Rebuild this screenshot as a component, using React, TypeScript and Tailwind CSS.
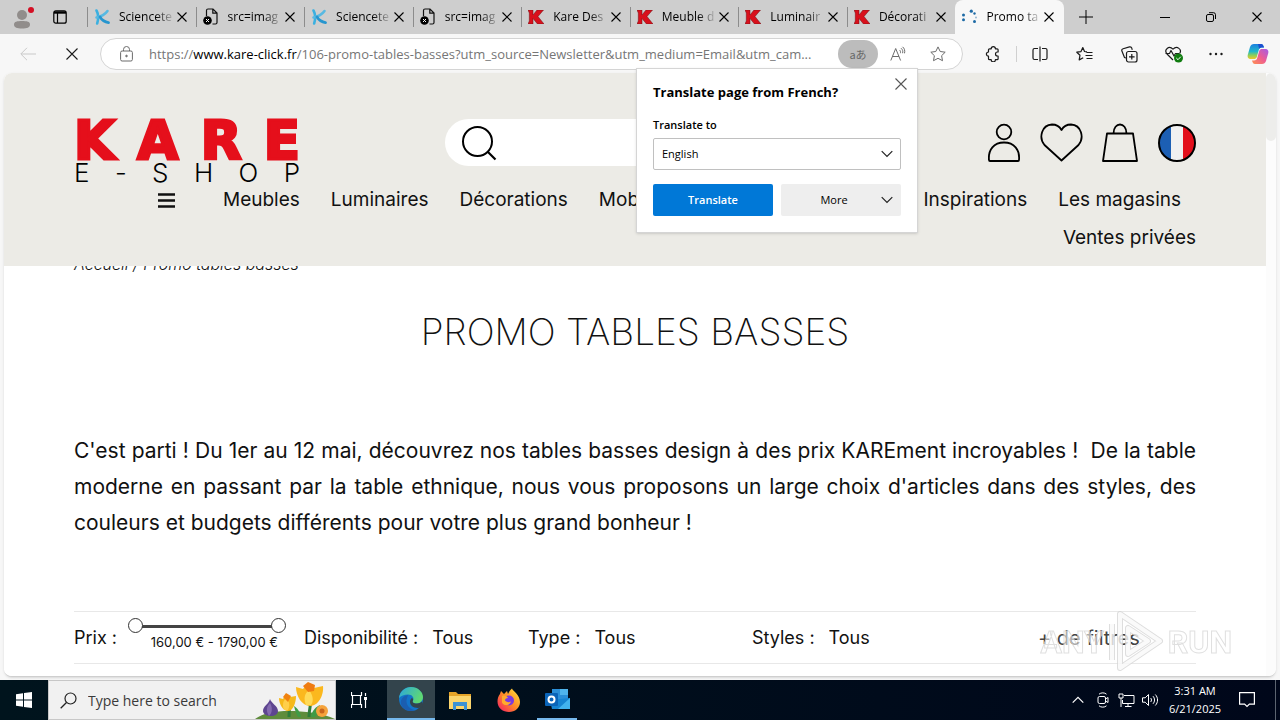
import type { ReactNode } from "react";

const UI = "font-['Open_Sans','Noto_Sans',sans-serif]";

function Svg({ w = 20, h = 20, box, children, cls = "" }: { w?: number; h?: number; box?: string; children: ReactNode; cls?: string }) {
  return (
    <svg width={w} height={h} viewBox={box ?? `0 0 ${w} ${h}`} fill="none" stroke="currentColor" className={`shrink-0 ${cls}`} aria-hidden="true">
      {children}
    </svg>
  );
}

const Cross = ({ size = 10 }: { size?: number }) => (
  <Svg w={size} h={size}><path d={`M.5.5L${size - 0.5} ${size - 0.5}M${size - 0.5}.5L.5 ${size - 0.5}`} strokeWidth="1.1" /></Svg>
);
const Chevron = () => (
  <Svg w={12} h={8}><path d="M.7 1.2L6 6.500l5.300-5.300" strokeWidth="1.200" /></Svg>
);

const ScienceIcon = () => (
  <Svg w={16} h={16}>
    <path d="M2.500 1.500C4.500 5 4.500 10 3.200 14.500" stroke="#3bb0e0" strokeWidth="2.600" strokeLinecap="round" />
    <path d="M13.500 2C11 5.500 7.500 7.500 2.500 8.500" stroke="#57b9e2" strokeWidth="2.600" strokeLinecap="round" />
    <path d="M6 8c2 3.200 4.500 5 8.500 5.600" stroke="#2796cf" strokeWidth="2.800" strokeLinecap="round" />
  </Svg>
);
const FileIcon = () => (
  <Svg w={16} h={18}>
    <path d="M3.500 8V2.500C3.500 1.500 4 1 5 1h5l4 4v9.500c0 1-.5 1.500-1.500 1.500H9.500M9.800 1v4.200H14" stroke="#111" strokeWidth="1.200" />
    <circle cx="4.500" cy="12.500" r="4.300" fill="#000" stroke="none" />
    <path d="M3 11l3 3M6 11l-3 3" stroke="#fff" />
  </Svg>
);
const KareIcon = () => (
  <Svg w={16} h={14}>
    <path d="M0 0h5v5l4-5h6.500L10 6.500 16 14H9.500L5 8.500V14H0l1.300-3V3z" fill="#d8101c" stroke="#6e1014" strokeWidth=".5" />
  </Svg>
);
const LoadIcon = () => (
  <Svg w={16} h={16}>
    <g fill="#1d6aa5" stroke="none">
      <circle cx="2.500" cy="6" r="1.500" /><circle cx="2.500" cy="10.800" r="1.500" /><circle cx="10.300" cy="2.200" r="1.600" />
      <circle cx="13.500" cy="4.500" r="1.200" /><circle cx="15" cy="8.500" r=".9" opacity=".5" /><circle cx="13.500" cy="12.500" r="1.500" />
    </g>
  </Svg>
);

const TABS: { title: string; icon: ReactNode }[] = [
  { title: "Sciencete", icon: <ScienceIcon /> },
  { title: "src=imag", icon: <FileIcon /> },
  { title: "Sciencete", icon: <ScienceIcon /> },
  { title: "src=imag", icon: <FileIcon /> },
  { title: "Kare Des", icon: <KareIcon /> },
  { title: "Meuble d", icon: <KareIcon /> },
  { title: "Luminair", icon: <KareIcon /> },
  { title: "Décorati", icon: <KareIcon /> },
  { title: "Promo ta", icon: <LoadIcon /> },
];

function TabBar() {
  return (
    <div className="flex h-[34px] items-stretch bg-[#cecece]">
      <div className="flex w-[87px] shrink-0 items-center gap-[18px] pl-3">
        <button aria-label="Profile" className="shrink-0">
          <Svg w={23} h={24}>
            <circle cx="10" cy="10" r="5" fill="#918d8b" stroke="none" />
            <path d="M2 19.500c0-3 3-3.500 8-3.500s8 .5 8 3.500-3 4-8 4-8-1-8-4z" fill="#918d8b" stroke="none" />
            <circle cx="19" cy="5" r="3" fill="#d40f24" stroke="none" />
          </Svg>
        </button>
        <button aria-label="Tab actions" className="shrink-0">
          <Svg w={14} h={14}><rect x=".8" y=".8" width="12.400" height="12.400" rx="2" strokeWidth="1.200" /><path d="M1 2.500h12" strokeWidth="2.400" /><path d="M4.500 3v10" strokeWidth="1.200" /></Svg>
        </button>
      </div>
      <div role="tablist" className="grid flex-[0_1_977px] grid-cols-9">
        {TABS.map((t, i) => (
          <div
            key={i}
            className={i === 8 ? "flex items-center rounded-t-lg bg-[#f7f7f7] pr-[10px] pl-[6px]" : "relative flex items-center pr-[9px] pl-[7px] before:absolute before:left-0 before:h-5 before:w-px before:bg-[#8c8c8c]"}
          >
            <button role="tab" aria-selected={i === 8} className="flex min-w-0 flex-1 items-center gap-[9px] text-left">
              {t.icon}
              <span className={`${UI} flex-1 whitespace-nowrap text-[12px] leading-5 text-black [mask-image:linear-gradient(to_right,#000_65%,transparent)]`}>{t.title}</span>
            </button>
            <button aria-label="Close tab" className="ml-[2px]"><Cross /></button>
          </div>
        ))}
      </div>
      <button aria-label="New tab" className="ml-[15px] self-center"><Svg w={14} h={14}><path d="M7 0v14M0 7h14" /></Svg></button>
      <div className="ml-auto flex items-center gap-9 pr-[18px]">
        <button aria-label="Minimize"><Svg w={10} h={10}><path d="M0 5.500h10" /></Svg></button>
        <button aria-label="Restore"><Svg w={10} h={10}><rect x=".5" y="2.500" width="7" height="7" rx="1.500" /><path d="M3 .7h4.500a2 2 0 0 1 2 2V7" /></Svg></button>
        <button aria-label="Close"><Cross /></button>
      </div>
    </div>
  );
}

function Toolbar() {
  return (
    <div className="flex h-10 items-center bg-[#f7f7f7] text-[#1b1b1b]">
      <button aria-label="Back" className="ml-5 text-[#c9c9c9]"><Svg w={16} h={14}><path d="M7 .8L.8 7 7 13.200M1 7h15" /></Svg></button>
      <button aria-label="Stop" className="ml-[30px]"><Cross size={12} /></button>
      <div className="ml-[22px] flex h-8 min-w-0 flex-[0_1_863px] items-center rounded-full border border-[#d4d4d4] bg-white pl-[19px] text-[#6b6b6b]">
        <Svg w={13} h={16}><rect x=".6" y="5" width="11.800" height="10" rx="1.500" /><path d="M3.500 5V3.500a3 3 0 0 1 6 0V5" /><circle cx="6.500" cy="10" r=".8" fill="currentColor" /></Svg>
        <a href="#top" className={`${UI} ml-4 min-w-0 flex-1 truncate text-[13px] leading-6 text-[#767676]`}>
          https://<span className="text-black">www.kare-click.fr</span>/106-promo-tables-basses?utm_source=Newsletter&amp;utm_medium=Email&amp;utm_cam...
        </a>
        <button aria-label="Translate" className="ml-2 flex h-7 w-10 items-center justify-center rounded-full bg-[#bcbcbc] font-['Noto_Sans_CJK_JP',sans-serif] text-[11px] leading-4 text-[#686868]">aあ</button>
        <button aria-label="Read aloud" className="ml-3"><Svg w={16} h={16}><path d="M.8 14.500L5.700 2.500l4.900 12M2.500 10.500H9M9.500 4c1 .8 1.200 2 .9 3.200M11 2.200c1.700 1.300 2.100 3.200 1.600 5M12.500.8c2 1.500 2.700 4 2 6.500" /></Svg></button>
        <button aria-label="Favorite" className="mr-4 ml-6"><Svg w={16} h={16}><path d="M8 .9l2.200 4.600 5 .7-3.600 3.500.9 5L8 12.300l-4.500 2.400.9-5L.8 6.200l5-.7z" strokeLinejoin="round" /></Svg></button>
      </div>
      <div className="ml-auto flex items-center pr-[11px]">
        <button aria-label="Extensions"><Svg w={16} h={16}><path d="M4.500 2.800h1.700a2.100 2.100 0 0 1 4.200 0h1.700c.6 0 1 .4 1 1V6h-.6a1.900 1.900 0 0 0 0 4h.6v2.700c0 .6-.4 1-1 1h-1.700a2.100 2.100 0 0 1-4.200 0H4.500c-.6 0-1-.4-1-1v-2.500a2.100 2.100 0 0 1 0-4.200V3.800c0-.6.4-1 1-1z" strokeWidth="1.200" strokeLinejoin="round" /></Svg></button>
        <span className="mx-[15px] h-4 w-px bg-[#d0d0d0]" />
        <button aria-label="Split screen"><Svg w={16} h={16}><path d="M6 2.500H2.500a1.500 1.500 0 0 0-1.500 1.500v8a1.500 1.500 0 0 0 1.500 1.500H6M10 2.500h3.500A1.500 1.500 0 0 1 15 4v8a1.500 1.500 0 0 1-1.500 1.500H10M8 .5v15" strokeWidth="1.200" /></Svg></button>
        <button aria-label="Favorites" className="ml-7"><Svg w={17} h={16}><path d="M11 5.800L8.500 5.500 6.800 1.500 5 5.600l-4.200.6 3.200 3-.8 4.700 4-2.200M10.500 6.500h6M9.500 9.500h7M10.500 12.500h6" strokeWidth="1.200" strokeLinejoin="round" /></Svg></button>
        <button aria-label="Collections" className="ml-7"><Svg w={17} h={17}><rect x="5.500" y="5.500" width="10.500" height="10.500" rx="2" strokeWidth="1.200" /><path d="M10.800 8v5.600M8 10.800h5.600M5 12l-1.500-.5L.9 5c-.4-1 .2-2 1.200-2.300L8.500.9c1-.2 2 .3 2.300 1.300l.5 1.500" strokeWidth="1.200" /></Svg></button>
        <button aria-label="Browser essentials" className="ml-[27px]"><Svg w={19} h={17}><path d="M8 14L2 8C-1.500 3.500 4-.8 8 3.200c4-4 9.500.3 6.500 4.500M.5 7.500h4l1.500-3 3 5.500 1.500-2.500H14" strokeWidth="1.200" strokeLinejoin="round" /><circle cx="13.500" cy="12" r="4.500" fill="#107c10" stroke="none" /><path d="M11.300 12l1.700 1.700 2.800-3" stroke="#fff" /></Svg></button>
        <button aria-label="Settings" className="ml-6"><Svg w={16} h={6}><g fill="currentColor" stroke="none"><circle cx="2.500" cy="3" r="1.200" /><circle cx="8" cy="3" r="1.200" /><circle cx="13.500" cy="3" r="1.200" /></g></Svg></button>
        <button aria-label="Copilot" className="ml-[23px]">
          <Svg w={22} h={22}>
            <defs>
              <linearGradient id="cpa" x1="0" y1="0" x2="0" y2="1"><stop stopColor="#1b7fe0" /><stop offset=".5" stopColor="#22b8c9" /><stop offset=".75" stopColor="#8ccf5a" /><stop offset="1" stopColor="#f2c92b" /></linearGradient>
              <linearGradient id="cpb" x1="1" y1="0" x2="0" y2="1"><stop stopColor="#a35be8" /><stop offset=".5" stopColor="#ee5c92" /><stop offset="1" stopColor="#ff9250" /></linearGradient>
            </defs>
            <path d="M7 1h7c2 0 2.500 2 3 3.500h-2c-2 0-2.800 1-3.300 2.800L9.800 14c-.5 1.500-1.500 2-3 2H4c-3 0-4-2-3-5l2-7C3.700 2 5 1 7 1z" fill="url(#cpa)" stroke="none" />
            <path d="M11 1h3c2 0 2.500 2 3 3.500h-2c-1.500 0-2.300.5-2.800 1.500z" fill="#1c4fd0" stroke="none" />
            <path d="M15 21H8c-2 0-2.500-2-3-3.500h2c2 0 2.800-1 3.300-2.800L12.200 8c.5-1.500 1.500-2 3-2H18c3 0 4 2 3 5l-2 7c-.7 2-2 3-4 3z" fill="url(#cpb)" stroke="none" />
          </Svg>
        </button>
      </div>
    </div>
  );
}

function TranslatePopup() {
  return (
    <section className={`${UI} absolute top-[68px] right-[362px] z-30 w-[282px] border border-[#d5d5d5] bg-white px-4 pt-[11px] pb-4 text-black shadow-sm`}>
      <button aria-label="Dismiss" className="absolute top-[9px] right-[10px] text-[#555]"><Cross size={12} /></button>
      <h2 className="text-[13px] leading-6 font-bold">Translate page from French?</h2>
      <label htmlFor="lang" className="mt-[11px] block text-[11px] leading-5 font-semibold">Translate to</label>
      <div className="relative mt-[3px]">
        <select id="lang" className="h-8 w-full appearance-none rounded-xs border border-[#c0c0c0] bg-white px-2 text-[11px]"><option>English</option></select>
        <span className="pointer-events-none absolute inset-y-0 right-2 flex items-center text-[#222]"><Chevron /></span>
      </div>
      <div className="mt-[14px] grid grid-cols-2 gap-2 text-[11px]">
        <button className="h-8 rounded-xs bg-[#0078d7] font-semibold text-white">Translate</button>
        <button className="relative h-8 rounded-xs bg-[#eeeeee] pr-[14px]">More<span className="absolute inset-y-0 right-2 flex items-center text-[#222]"><Chevron /></span></button>
      </div>
    </section>
  );
}

function SiteHeader() {
  const link = "text-[19px] leading-[38px]";
  return (
    <header className="relative z-10 h-[193px] bg-[#ecebe6] px-[70px] pt-[46px]">
      <div className="flex h-[62px] items-start">
        <a href="#home" className="block w-[226px] shrink-0">
          <span className="flex h-[41px] justify-between font-['DejaVu_Sans',sans-serif] text-[53px] leading-[43px] font-bold text-[#e50f1b] [-webkit-text-stroke:3px_#e50f1b]">
            <span>K</span><span>A</span><span>R</span><span>E</span>
          </span>
          <span className="flex justify-between text-[26px] leading-[26px] font-light text-black">
            <span>E</span><span>-</span><span>S</span><span>H</span><span>O</span><span>P</span>
          </span>
        </a>
        <label className="ml-[145px] flex h-[47px] w-[380px] items-center rounded-full bg-white pl-4 text-black">
          <Svg w={38} h={38}><circle cx="16.500" cy="17.500" r="14.500" strokeWidth="2" /><path d="M27 28l7.500 7.500" strokeWidth="2.200" /></Svg>
          <input type="search" aria-label="Rechercher" className="min-w-0 flex-1 bg-transparent outline-none" />
        </label>
        <div className="ml-auto flex items-center pt-1 text-black">
          <a href="#account" aria-label="Compte"><Svg w={34} h={40}><circle cx="17" cy="9" r="7.300" strokeWidth="1.800" /><path d="M2 37c-1-10.500 5-17.500 15-17.500S33 26.500 32 37c0 .7-.5 1-1 1H3c-.6 0-1-.3-1-1z" strokeWidth="1.800" /></Svg></a>
          <a href="#wishlist" aria-label="Favoris" className="ml-[19px]"><Svg w={44} h={40}><path d="M21.500 37.500L4.500 22C-1.500 15 1.500 2 12 1.500c4.500 0 7.500 2 9.500 5.500 2-3.500 5-5.500 9.500-5.500C41.500 2 44.500 15 38.500 22z" strokeWidth="1.800" strokeLinejoin="round" /></Svg></a>
          <a href="#cart" aria-label="Panier" className="ml-[18px]"><Svg w={36} h={40}><path d="M5 10.500h26L35 38H1zM11.500 10.500c0-12 13-12 13 0" strokeWidth="1.800" strokeLinejoin="round" /></Svg></a>
          <a href="#fr" aria-label="Français" className="ml-5"><Svg w={38} h={38}><path d="M13 2a18 18 0 0 0 0 34z" fill="#1c5fb4" stroke="none" /><path d="M13 1h12v36H13z" fill="#f0f0f0" stroke="none" /><path d="M25 2a18 18 0 0 1 0 34z" fill="#e3101c" stroke="none" /><circle cx="19" cy="19" r="18" strokeWidth="2" /></Svg></a>
        </div>
      </div>
      <nav className="text-[#111]">
        <div className="flex items-center pr-[15px]">
          <button aria-label="Menu" className="ml-[84px] w-[65px]"><Svg w={17} h={15}><path d="M0 1.500h17M0 7.500h17M0 13.500h17" strokeWidth="2.600" /></Svg></button>
          <div className="flex gap-[31px]">
            <a href="#m" className={link}>Meubles</a>
            <a href="#l" className={link}>Luminaires</a>
            <a href="#d" className={link}>Décorations</a>
            <a href="#j" className={link}>Mobilier</a>
          </div>
          <div className="ml-auto flex gap-[31px]">
            <a href="#i" className={link}>Inspirations</a>
            <a href="#s" className={link}>Les magasins</a>
          </div>
        </div>
        <div className="flex justify-end"><a href="#v" className={link}>Ventes privées</a></div>
      </nav>
    </header>
  );
}

function Filter({ id, label }: { id: string; label: string }) {
  return (
    <div className="flex items-center gap-[14px]">
      <label htmlFor={id}>{label} :</label>
      <select id={id} className="appearance-none bg-transparent"><option>Tous</option></select>
    </div>
  );
}

const range =
  "pointer-events-none absolute inset-0 m-0 h-4 w-full appearance-none bg-transparent [&::-webkit-slider-thumb]:pointer-events-auto [&::-webkit-slider-thumb]:size-[15px] [&::-webkit-slider-thumb]:appearance-none [&::-webkit-slider-thumb]:rounded-full [&::-webkit-slider-thumb]:border [&::-webkit-slider-thumb]:border-solid [&::-webkit-slider-thumb]:border-[#333] [&::-webkit-slider-thumb]:bg-white";

function Filters() {
  return (
    <form className="mt-[70px] grid h-[53px] grid-cols-[230fr_224fr_224fr_286fr_158fr] items-center border-y border-[#e8e8e8] text-[18px]">
      <div className="flex items-center gap-[10px]">
        <span className="w-11 whitespace-nowrap">Prix :</span>
        <div className="w-[158px] pb-2">
          <div className="relative h-4">
            <span className="absolute inset-x-2 top-[7px] h-[3px] bg-[#444]" />
            <input type="range" aria-label="Prix minimum" min={160} max={1790} defaultValue={160} className={range} />
            <input type="range" aria-label="Prix maximum" min={160} max={1790} defaultValue={1790} className={range} />
          </div>
          <p className="pr-2 text-right text-[13px] leading-4 whitespace-nowrap">160,00 € - 1790,00 €</p>
        </div>
      </div>
      <Filter id="stock" label="Disponibilité" />
      <Filter id="type" label="Type" />
      <Filter id="style" label="Styles" />
      <button type="button" className="text-left text-[20px] text-[#444]">+ de filtres</button>
    </form>
  );
}

function Watermark() {
  const word = "font-['Roboto',sans-serif] text-[32px] leading-none font-bold text-white/70 [-webkit-text-stroke:1px_#d8d8d8]";
  return (
    <div className="pointer-events-none absolute right-[44px] bottom-[2px] z-20 flex items-center gap-1 opacity-80">
      <span className={word}>ANY</span>
      <Svg w={56} h={64}><path d="M4 14v36M12 4v54l40-27zM20 18v26l20-13z" stroke="#d6d6d6" strokeWidth="6" strokeLinejoin="round" /><path d="M4 14v36M12 4v54l40-27zM20 18v26l20-13z" stroke="#fafafa" strokeWidth="4" strokeLinejoin="round" /></Svg>
      <span className={word}>RUN</span>
    </div>
  );
}

function Taskbar() {
  return (
    <footer className={`${UI} flex h-10 items-stretch bg-linear-to-r from-[#00141d] to-[#00071a] text-white`}>
      <button aria-label="Start" className="flex w-12 items-center justify-center"><Svg w={16} h={16}><path d="M0 2.200l7-1v6.300H0zM8 1.100L16 0v7.500H8zM0 8.500h7v6.300l-7-1zM8 8.500h8V16l-8-1.100z" fill="#fff" stroke="none" /></Svg></button>
      <label className="flex w-72 items-center overflow-hidden border border-[#c8c8c8] bg-[#f1f1f1] pl-[11px] text-[#222]">
        <Svg w={17} h={17}><circle cx="10.500" cy="6.500" r="5.500" strokeWidth="1.200" /><path d="M6.500 10.500L.7 16.300" strokeWidth="1.300" /></Svg>
        <input type="text" aria-label="Search" placeholder="Type here to search" className="ml-[11px] w-[150px] bg-transparent text-[14px] outline-none placeholder:text-[#3a3a3a]" />
        <Svg w={80} h={38} cls="ml-auto">
          <g stroke="none">
            <path d="M0 38c8-6 20-8 34-8s34 2 46 8z" fill="#5f8c3c" />
            <path d="M34 36c0-6 1-10 0-14M54 36c0-8 2-12 2-18" stroke="#2f7d3a" strokeWidth="3" />
            <path d="M46 36c-1-6-4-9-7-11 1 5 3 9 4 11zM56 36c1-7 5-10 9-12-1 6-4 10-5 12z" fill="#3f9b46" />
            <path d="M15 18c1 4 8 7 8 12 0 3-3 5-7 5s-8-2-8-5c0-5 6-7 7-12z" fill="#5e4590" />
            <path d="M15 22c-4 4-4 8-1 13 3-3 4-8 1-13z" fill="#846bb0" />
            <path d="M24 17l4 1 3-5 4 3 6-1c0 7-3 15-8 15s-9-7-9-13z" fill="#f6b91b" />
            <path d="M29 29c-2-5-1-9 2-12 4 4 4 8 2 12z" fill="#ffcf4a" />
            <path d="M28 16l3-4 5 3-3 6z" fill="#f0820f" />
            <path d="M41 6l7 2 5-6 6 5 9-2c1 10-5 20-13 20S41 15 41 6z" fill="#fbb81e" />
            <path d="M51 24c-3-7-1-12 3-15 4 5 5 11 2 15z" fill="#ffda57" />
            <path d="M48 5l5-4 7 3-1 6-6 1z" fill="#ef7c12" />
            <circle cx="67" cy="30" r="6" fill="#f5a33c" /><circle cx="67" cy="30" r="2.500" fill="#c9651c" />
          </g>
        </Svg>
      </label>
      <button aria-label="Task view" className="flex w-[51px] items-center justify-center pr-1"><Svg w={17} h={16}><path d="M.5 0v3.500h10V0M.5 16v-3.500h10V16M1.500 3.500v9M9.500 3.500v9M14.500 1v3M14.500 8v8" strokeWidth="1.200" /><path d="M13 5h3v3h-3z" fill="#fff" stroke="none" /></Svg></button>
      <button aria-label="Edge" className="flex w-12 items-center justify-center border-b-2 border-[#76b9ed] bg-[#33444c]">
        <Svg w={24} h={24}>
          <defs><linearGradient id="ea" x1="0" y1="0" x2="1" y2=".4"><stop stopColor="#2aa6df" /><stop offset="1" stopColor="#5fd873" /></linearGradient></defs>
          <g stroke="none">
            <circle cx="12" cy="12" r="12" fill="#1374c9" />
            <path d="M0 11C1 4 6 0 12 0c7 0 12 5 12 10 0 4-3 6.500-6 6.500-4 0-5-1.500-4-3 1.500-3-1-6-5-6-4 0-7 1.500-9 3.500z" fill="url(#ea)" />
            <path d="M8 11c-2 6 2 11 8 12.300C10 25 4 23 2 17c-1-4 2-8 7-9z" fill="#1b5eb0" />
            <path d="M14 13.500c-1 1.500 0 3 4 3 2 0 4-.8 4.800-2L24 20l-5 1c-5 0-8-3-8-6 0-2 1-3.500 2-4 1 .7 1.500 1.500 1 2.500z" fill="#33444c" />
          </g>
        </Svg>
      </button>
      <button aria-label="File Explorer" className="flex w-[50px] items-center justify-center"><Svg w={22} h={19}><g stroke="none"><path d="M0 1h7l2 2h13v15H0z" fill="#e5a429" /><path d="M0 5h22v13H0z" fill="#fbd56d" /><path d="M4 11h14v8h-3v-4H7v4H4z" fill="#3b91d4" /></g></Svg></button>
      <button aria-label="Firefox" className="flex w-12 items-center justify-center">
        <Svg w={24} h={24}>
          <defs><linearGradient id="ff" x1="1" y1="0" x2="0" y2="1"><stop stopColor="#ffe83e" /><stop offset=".5" stopColor="#ff8a26" /><stop offset="1" stopColor="#f5136a" /></linearGradient></defs>
          <g stroke="none"><path d="M3 6l1-3 3 3 3-3 1 3c1-2 2-4 4-5.500 1 3 8 6 8 13.500 0 6-5 10-11 10S.5 20 .5 13.500C.5 10 1.500 8 3 6z" fill="url(#ff)" /><circle cx="12" cy="12.500" r="5" fill="#7a3ae0" /><path d="M5 8c3-1 5 0 6 2-2 0-3 1-3 2.500 2 2 4 2 6 1-1 4-7 5-9 1z" fill="#ffab2c" /></g>
        </Svg>
      </button>
      <button aria-label="Outlook" className="ml-1 flex w-10 items-center justify-center border-b-2 border-[#76b9ed]"><Svg w={25} h={22}><g stroke="none"><path d="M7 1h16v12H7z" fill="#2a8fd8" /><path d="M15 1h8v6h-8z" fill="#4fb4ec" /><path d="M5 12l20-2v11H7z" fill="#1684d2" /><path d="M25 10v11H13z" fill="#42b3ee" /><rect y="5" width="13" height="13" rx="1" fill="#0a64b8" /></g><circle cx="6.500" cy="11.500" r="3" stroke="#fff" strokeWidth="2" /></Svg></button>
      <div className="ml-auto flex items-center">
        <button aria-label="Hidden icons"><Svg w={12} h={8}><path d="M.7 6.700L6 1.400l5.300 5.300" strokeWidth="1.200" /></Svg></button>
        <button aria-label="Camera" className="ml-[13px]"><Svg w={12} h={16}><rect x="1" y="4.500" width="7.500" height="7" rx="1.500" /><path d="M8.500 7l2.500-1.500v5L8.500 9M2 2.200C4 .4 7.500.4 9.500 2.200M2 13.800c2 1.800 5.500 1.800 7.500 0" /></Svg></button>
        <button aria-label="Network" className="ml-[9px]"><Svg w={17} h={15}><path d="M6 2.500h10v8H4.500V7M10 10.500v3M7 13.500h6.500M1 1h4v4H1zM3 5v9" /></Svg></button>
        <button aria-label="Volume" className="ml-[7px]"><Svg w={17} h={14}><path d="M.5 4.800h2.700L6.500 1.500v11L3.200 9.200H.5zM8.700 5c1 1.200 1 2.800 0 4M11 3.200c2 2.200 2 5.400 0 7.600M13.300 1.500c3 3.200 3 7.800 0 11" /></Svg></button>
        <time className="ml-[9px] w-[54px] text-center text-[11px] leading-[18px] whitespace-nowrap">3:31 AM<br />6/21/2025</time>
        <button aria-label="Notifications" className="ml-[17px]"><Svg w={16} h={16}><path d="M.6.600h14.800v11.500h-5L8 14.500l-2.400-2.400h-5z" strokeWidth="1.200" /></Svg></button>
        <span className="ml-5 h-10 w-px bg-[#5c6470]" />
        <span className="w-1" />
      </div>
    </footer>
  );
}

export default function App() {
  return (
    <div className="relative flex min-h-screen flex-col overflow-hidden bg-[#f7f7f7]">
      <TabBar />
      <Toolbar />
      <TranslatePopup />
      <div className="relative mx-1 mt-[-1px] mb-[3px] flex flex-1 overflow-hidden rounded-lg border-b border-[#cfcfcf] bg-white shadow-sm">
        <div className="min-w-0 flex-1 bg-white font-['Inter',sans-serif] text-[#111]">
          <SiteHeader />
          <main className="-mt-[14px] px-[70px]">
            <p className="text-[16px] leading-6 font-light italic">Accueil / Promo tables basses</p>
            <h1 className="mt-[31px] text-center text-[37px] leading-[50px] font-extralight">PROMO TABLES BASSES</h1>
            <p className="mt-[76px] text-justify text-[21px] leading-9">
              C'est parti ! Du 1er au 12 mai, découvrez nos tables basses design à des prix KAREment incroyables !&nbsp; De la table moderne en passant par la table ethnique, nous vous proposons un large choix d'articles dans des styles, des couleurs et budgets différents pour votre plus grand bonheur !
            </p>
            <Filters />
          </main>
        </div>
        <div className="w-[10px] shrink-0 bg-[#fcfcfc]"><div className="h-[68px] rounded-full bg-[#ededeb]" /></div>
        <Watermark />
      </div>
      <Taskbar />
    </div>
  );
}
